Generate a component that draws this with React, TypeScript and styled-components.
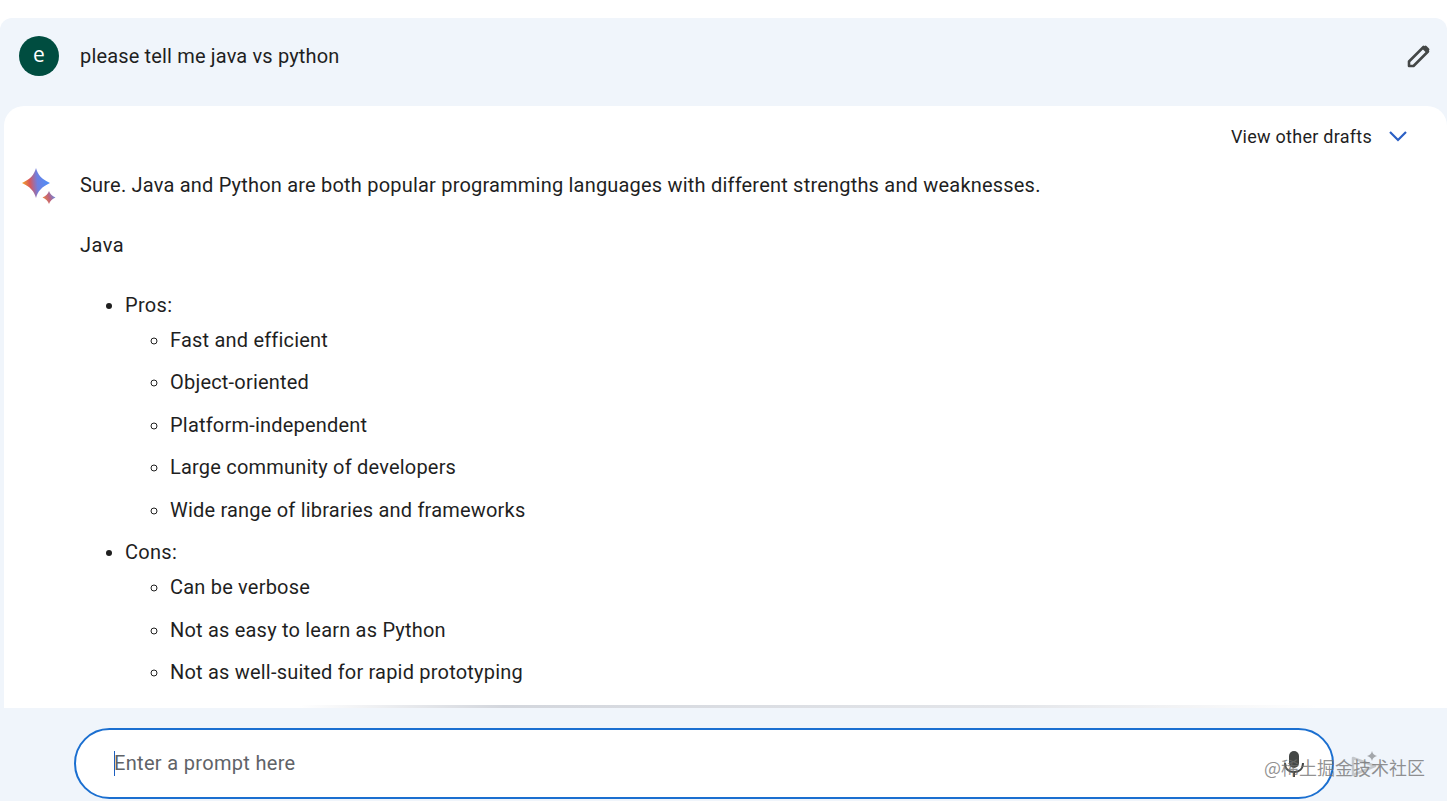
import React from 'react';
import styled, { createGlobalStyle } from 'styled-components';

const GlobalStyle = createGlobalStyle`
    html, body {
        margin: 0;
        padding: 0;
        background: #ffffff;
    }
    body {
        font-family: 'Roboto', 'Liberation Sans', sans-serif;
        color: #1f1f1f;
    }
`

const javaPros = [
    'Fast and efficient',
    'Object-oriented',
    'Platform-independent',
    'Large community of developers',
    'Wide range of libraries and frameworks',
]
const javaCons = [
    'Can be verbose',
    'Not as easy to learn as Python',
    'Not as well-suited for rapid prototyping',
]

const SparkIcon = () => (
    <svg width="40" height="38" viewBox="0 0 40 38">
        <defs>
            <linearGradient id="spark" x1="0" y1="0.55" x2="1" y2="0.45">
                <stop offset="0" stopColor="#f5a623" />
                <stop offset="0.28" stopColor="#d8585a" />
                <stop offset="0.55" stopColor="#6f7fe0" />
                <stop offset="1" stopColor="#4a90fa" />
            </linearGradient>
            <linearGradient id="sparkSmall" x1="0" y1="0.7" x2="1" y2="0.3">
                <stop offset="0" stopColor="#ee8a3c" />
                <stop offset="0.5" stopColor="#c0627c" />
                <stop offset="1" stopColor="#5a8ff0" />
            </linearGradient>
        </defs>
        <path d="M15 0 C16.500 6.500 21 11.500 29 15 C21 18.500 16.500 23.500 15 30 C13.500 23.500 9 18.500 1 15 C9 11.500 13.500 6.500 15 0 Z" fill="url(#spark)" />
        <path d="M28 23 C29 26 31 28 34.500 29.500 C31 31 29 33 28 36 C27 33 25 31 21.500 29.500 C25 28 27 26 28 23 Z" fill="url(#sparkSmall)" />
    </svg>
)

const PencilIcon = () => (
    <svg width="24" height="24" viewBox="0 0 24 24" fill="none">
        <path d="M2 22 L2 17.500 L16.500 3 L21 7.500 L6.500 22 Z" stroke="#444746" strokeWidth="2.600" strokeLinejoin="round" />
        <path d="M15 4.500 L17.500 2 Q18.500 1 19.500 2 L22 4.500 Q23 5.500 22 6.500 L19.500 9 Z" fill="#444746" />
    </svg>
)

const ChevronIcon = () => (
    <svg width="20" height="12" viewBox="0 0 20 12" fill="none">
        <path d="M2 2 L10 10 L18 2" stroke="#2a5fc4" strokeWidth="2.200" />
    </svg>
)

const MicIcon = () => (
    <svg width="24" height="28" viewBox="0 0 24 28">
        <rect x="7" y="1" width="10" height="17" rx="5" fill="#444746" />
        <path d="M3 13 C3 19 7 22 12 22 C17 22 21 19 21 13" stroke="#444746" strokeWidth="2" fill="none" />
        <rect x="11" y="22" width="2" height="5" fill="#444746" />
    </svg>
)

const SendIcon = () => (
    <svg width="44" height="34" viewBox="0 0 44 34" fill="none">
        <path d="M15 7 L15 24 L37 15 Z" stroke="#c4c7cb" strokeWidth="2.500" strokeLinejoin="round" />
        <path d="M34 0 C34.800 3 36 4.200 39 5 C36 5.800 34.800 7 34 10 C33.200 7 32 5.800 29 5 C32 4.200 33.200 3 34 0 Z" fill="#a3a6aa" />
    </svg>
)

const App: React.FC = () => {
    return (
        <Page>
            <GlobalStyle />
            <Chat>
                <PromptRow>
                    <Avatar>e</Avatar>
                    <PromptText>please tell me java vs python</PromptText>
                    <EditButton><PencilIcon /></EditButton>
                </PromptRow>
                <ResponseCard>
                    <DraftsRow>
                        <DraftsLabel>View other drafts</DraftsLabel>
                        <ChevronIcon />
                    </DraftsRow>
                    <ResponseBody>
                        <SparkSlot><SparkIcon /></SparkSlot>
                        <Markdown>
                            <Paragraph>Sure. Java and Python are both popular programming languages with different strengths and weaknesses.</Paragraph>
                            <Paragraph $strong>Java</Paragraph>
                            <OuterList>
                                <OuterItem>
                                    Pros:
                                    <InnerList>
                                        {javaPros.map((item) => <InnerItem key={item}>{item}</InnerItem>)}
                                    </InnerList>
                                </OuterItem>
                                <OuterItem>
                                    Cons:
                                    <InnerList>
                                        {javaCons.map((item) => <InnerItem key={item}>{item}</InnerItem>)}
                                    </InnerList>
                                </OuterItem>
                            </OuterList>
                        </Markdown>
                    </ResponseBody>
                </ResponseCard>
            </Chat>
            <InputArea>
                <InputBox>
                    <Caret />
                    <Placeholder>Enter a prompt here</Placeholder>
                    <MicSlot><MicIcon /></MicSlot>
                </InputBox>
                <SendSlot><SendIcon /></SendSlot>
                <Watermark>@稀土掘金技术社区</Watermark>
            </InputArea>
        </Page>
    )
}
export default App

const Page = styled.div`
    height: 801px;
    width: 1447px;
    padding-top: 18px;
    box-sizing: border-box;
    display: flex;
    flex-direction: column;
    overflow: hidden;
    position: relative;
`
const Chat = styled.main`
    flex: 1 1 auto;
    min-height: 0;
    background: #f0f5fb;
    border-radius: 12px 12px 0 0;
    display: flex;
    flex-direction: column;
    overflow: hidden;
`
const PromptRow = styled.div`
    flex: 0 0 88px;
    display: flex;
    align-items: center;
    padding: 0 16px 12px 19px;
    box-sizing: border-box;
`
const Avatar = styled.div`
    width: 40px;
    height: 40px;
    border-radius: 50%;
    background: #004d40;
    color: #ffffff;
    font-family: 'Open Sans', sans-serif;
    font-size: 21px;
    font-weight: 500;
    line-height: 37px;
    text-align: center;
    flex: none;
`
const PromptText = styled.div`
    margin-left: 21px;
    flex: 1;
    font-size: 20px;
    font-weight: 370;
    line-height: 30px;
    letter-spacing: 0.16px;
`
const EditButton = styled.div`
    width: 24px;
    height: 24px;
    flex: none;
`
const ResponseCard = styled.section`
    flex: 1 1 auto;
    min-height: 0;
    margin-left: 4px;
    background: #ffffff;
    border-radius: 20px 20px 0 0;
    overflow: hidden;
`
const DraftsRow = styled.div`
    display: flex;
    justify-content: flex-end;
    align-items: center;
    gap: 16px;
    height: 60px;
    padding-right: 39px;
`
const DraftsLabel = styled.span`
    font-size: 18px;
    font-weight: 400;
    letter-spacing: 0.26px;
    color: #1f1f1f;
`
const ResponseBody = styled.div`
    display: flex;
    align-items: flex-start;
    padding-left: 17px;
`
const SparkSlot = styled.div`
    flex: none;
    width: 59px;
    padding-top: 2px;
`
const Markdown = styled.div`
    flex: 1;
    font-size: 20px;
    line-height: 30px;
    color: #1f1f1f;
    padding-top: 4px;
`
const Paragraph = styled.p<{ $strong?: boolean }>`
    margin: 0 0 30px;
    font-weight: ${(props) => (props.$strong ? 400 : 370)};
    letter-spacing: ${(props) => (props.$strong ? '0.5px' : '0.2px')};
`
const OuterList = styled.ul`
    margin: 0;
    padding-left: 45px;
    list-style: disc;
`
const OuterItem = styled.li`
    margin-bottom: 12.45px;
    font-weight: 400;
    letter-spacing: 0.3px;
`
const InnerList = styled.ul`
    margin: 5px 0 0;
    padding-left: 45px;
    list-style: circle;
    font-weight: 370;
    letter-spacing: 0.2px;
`
const InnerItem = styled.li`
    margin-bottom: 12.45px;
`
const InputArea = styled.footer`
    flex: 0 0 93px;
    background: #f0f5fb;
    display: flex;
    align-items: flex-start;
    padding: 20px 0 0 74px;
    box-sizing: border-box;
    position: relative;

    &::before {
        content: '';
        position: absolute;
        left: 300px;
        right: 130px;
        top: -3px;
        height: 3px;
        background: linear-gradient(90deg, rgba(200, 204, 212, 0), rgba(200, 204, 212, 0.8) 20%, rgba(200, 204, 212, 0.5) 70%, rgba(200, 204, 212, 0));
    }
`
const InputBox = styled.div`
    width: 1260px;
    height: 71px;
    box-sizing: border-box;
    background: #ffffff;
    border: 2px solid #1b6fd0;
    border-radius: 36px;
    display: flex;
    align-items: center;
    padding-left: 38px;
    padding-right: 26px;
`
const Caret = styled.span`
    width: 1px;
    height: 25px;
    background: #1b5fc0;
    flex: none;
`
const Placeholder = styled.span`
    flex: 1;
    font-size: 20px;
    font-weight: 370;
    letter-spacing: 0.32px;
    color: #5f6368;
    margin-left: -1px;
    padding-bottom: 2px;
`
const MicSlot = styled.div`
    flex: none;
    height: 28px;
`
const SendSlot = styled.div`
    flex: none;
    margin: 23px 0 0 4px;
`
const Watermark = styled.span`
    position: absolute;
    left: 1264px;
    top: 48px;
    font-family: 'Noto Sans CJK SC', sans-serif;
    font-size: 18px;
    line-height: 22px;
    color: rgba(110, 110, 110, 0.75);
`
